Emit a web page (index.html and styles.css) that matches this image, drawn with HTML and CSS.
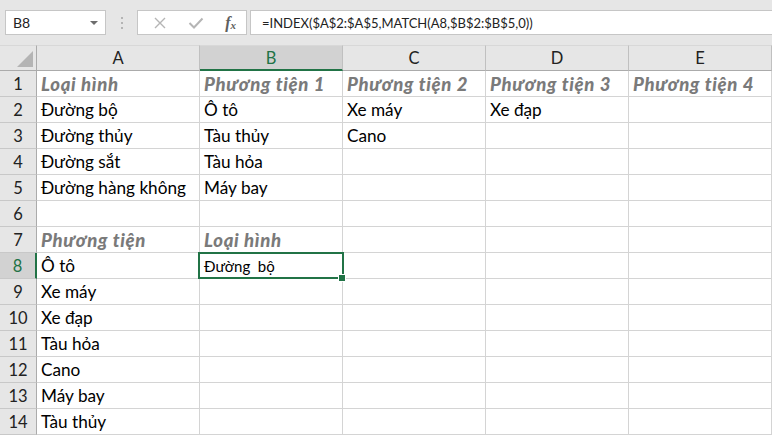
FILE: index.html
```html
<!DOCTYPE html>
<html lang="vi">
<head>
<meta charset="utf-8">
<link rel="stylesheet" href="styles.css">
</head>
<body>
<div class="app">
  <div class="fbar">
    <div class="namebox"><span>B8</span><span class="caret"></span></div>
    <div class="grip"><i></i><i></i><i></i></div>
    <div class="btns">
      <svg class="ico" width="14" height="14" viewBox="0 0 14 14"><path d="M2 2 L12 12 M12 2 L2 12" stroke="#b5b5b5" stroke-width="1.4" fill="none"/></svg>
      <svg class="ico" width="16" height="14" viewBox="0 0 16 14"><path d="M1.5 7 L6 11.5 L14.5 2.5" stroke="#b5b5b5" stroke-width="2" fill="none"/></svg>
      <span class="fx">f<sub>x</sub></span>
    </div>
    <div class="formula">=INDEX($A$2:$A$5,MATCH(A8,$B$2:$B$5,0))</div>
  </div>
  <div class="sheet">
    <div class="corner"><span class="tri"></span></div>
    <div class="ch">A</div><div class="ch sel">B</div><div class="ch">C</div><div class="ch">D</div><div class="ch">E</div>

    <div class="rh">1</div><div class="c h">Loại hình</div><div class="c h">Phương tiện 1</div><div class="c h">Phương tiện 2</div><div class="c h">Phương tiện 3</div><div class="c h">Phương tiện 4</div>
    <div class="rh">2</div><div class="c">Đường bộ</div><div class="c">Ô tô</div><div class="c">Xe máy</div><div class="c">Xe đạp</div><div class="c"></div>
    <div class="rh">3</div><div class="c">Đường thủy</div><div class="c">Tàu thủy</div><div class="c">Cano</div><div class="c"></div><div class="c"></div>
    <div class="rh">4</div><div class="c">Đường sắt</div><div class="c">Tàu hỏa</div><div class="c"></div><div class="c"></div><div class="c"></div>
    <div class="rh">5</div><div class="c">Đường hàng không</div><div class="c">Máy bay</div><div class="c"></div><div class="c"></div><div class="c"></div>
    <div class="rh">6</div><div class="c"></div><div class="c"></div><div class="c"></div><div class="c"></div><div class="c"></div>
    <div class="rh">7</div><div class="c h">Phương tiện</div><div class="c h">Loại hình</div><div class="c"></div><div class="c"></div><div class="c"></div>
    <div class="rh sel">8</div><div class="c">Ô tô</div><div class="c active">Đường&nbsp; bộ</div><div class="c"></div><div class="c"></div><div class="c"></div>
    <div class="rh">9</div><div class="c">Xe máy</div><div class="c"></div><div class="c"></div><div class="c"></div><div class="c"></div>
    <div class="rh">10</div><div class="c">Xe đạp</div><div class="c"></div><div class="c"></div><div class="c"></div><div class="c"></div>
    <div class="rh">11</div><div class="c">Tàu hỏa</div><div class="c"></div><div class="c"></div><div class="c"></div><div class="c"></div>
    <div class="rh">12</div><div class="c">Cano</div><div class="c"></div><div class="c"></div><div class="c"></div><div class="c"></div>
    <div class="rh">13</div><div class="c">Máy bay</div><div class="c"></div><div class="c"></div><div class="c"></div><div class="c"></div>
    <div class="rh">14</div><div class="c">Tàu thủy</div><div class="c"></div><div class="c"></div><div class="c"></div><div class="c"></div>
  </div>
</div>
</body>
</html>
```

FILE: styles.css
```css
* { box-sizing: border-box; }
html, body { margin: 0; padding: 0; background: #fff; }
body { width: 772px; height: 435px; overflow: hidden; font-family: Lato, "Noto Sans", sans-serif; }
.app { width: 772px; }

.fbar {
  height: 45px;
  background: #e6e6e6;
  display: flex;
  align-items: flex-start;
  padding: 10px 0 0 5px;
  font-family: Lato, "Noto Sans", sans-serif;
  font-size: 14px;
  color: #222;
}
.namebox {
  width: 101px; height: 25px;
  background: #fff;
  border: 1px solid #c6c6c6;
  display: flex; align-items: center; justify-content: space-between;
  padding: 0 7px 0 7px;
}
.caret {
  width: 0; height: 0;
  border-left: 4px solid transparent; border-right: 4px solid transparent;
  border-top: 4px solid #6d6d6d;
}
.grip {
  width: 31px; height: 25px;
  display: flex; flex-direction: column; align-items: center; justify-content: center; gap: 3px;
}
.grip i { display: block; width: 2px; height: 2px; background: #b4b4b4; }
.btns {
  width: 110px; height: 25px;
  background: #fff; border: 1px solid #c6c6c6;
  display: flex; align-items: center; justify-content: space-between;
  padding: 0 10px 0 15px;
}
.fx { font-family: "Liberation Serif", serif; font-style: italic; font-size: 16px; color: #5e5e5e; font-weight: bold; }
.fx sub { font-size: 11px; vertical-align: -1px; }
.formula {
  flex: 1; height: 25px; margin-left: 3px;
  background: #fff; border: 1px solid #c6c6c6; border-right: none;
  display: flex; align-items: center; padding-left: 11px;
  font-size: 13px; color: #222;
}

.sheet {
  display: grid;
  grid-template-columns: 37px 163px 143px 143px 143px 143px;
  grid-template-rows: 26px repeat(14, 26px);
  font-size: 17.2px;
}
.corner {
  background: #e6e6e6;
  border-right: 1px solid #ababab; border-bottom: 1px solid #ababab;
  border-top: 1px solid #d8d8d8;
  position: relative;
}
.tri {
  position: absolute; right: 3px; bottom: 3px; width: 0; height: 0;
  border-left: 16px solid transparent; border-bottom: 16px solid #b4b4b4;
}
.ch {
  background: #e6e6e6;
  border-top: 1px solid #d8d8d8;
  border-right: 1px solid #c0c0c0;
  border-bottom: 1px solid #ababab;
  display: flex; align-items: center; justify-content: center;
  color: #222; font-size: 16.5px;
}
.ch.sel { background: #d2d2d2; color: #217346; border-bottom: 2px solid #217346; }
.rh {
  background: #e6e6e6;
  border-right: 1px solid #ababab;
  border-bottom: 1px solid #c8c8c8;
  display: flex; align-items: center; justify-content: center;
  color: #222; font-size: 16.5px;
}
.rh.sel { background: #d2d2d2; color: #217346; border-right: 2px solid #217346; }
.c {
  border-right: 1px solid #d4d4d4;
  border-bottom: 1px solid #d4d4d4;
  display: flex; align-items: center;
  padding: 0 0 0 4px;
  white-space: nowrap;
  color: #000;
}
.c.h { font-family: Lato, "Noto Sans", sans-serif; font-weight: 900; font-style: italic; color: #7a7a7a; font-size: 18.5px; letter-spacing: 0.7px; }
.c.active { position: relative; font-size: 15px; }
.c.active::before {
  content: ""; position: absolute; left: -2px; top: -1px; right: -2px; bottom: -1px;
  border: 2px solid #217346;
}
.c.active::after {
  content: ""; position: absolute; right: -4px; bottom: -4px; width: 6px; height: 6px;
  background: #217346; border: 1px solid #fff;
}
```
